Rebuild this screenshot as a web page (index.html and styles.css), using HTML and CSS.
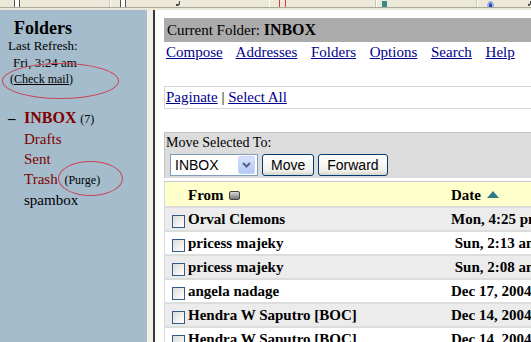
FILE: index.html
```html
<!DOCTYPE html>
<html lang="en">
<head>
    <meta charset="UTF-8">
    <meta name="viewport" content="width=device-width, initial-scale=1.0">
    <title>SquirrelMail - INBOX</title>
    <link rel="stylesheet" href="styles.css">
</head>
<body>
    <div class="toolbar">
        <span class="tb-icon tb-page"></span>
        <span class="tb-sep"></span>
        <span class="tb-icon tb-page"></span>
        <span class="tb-tick"></span>
        <span class="tb-sep"></span>
        <span class="tb-icon tb-red"></span>
        <span class="tb-sep"></span>
        <span class="tb-icon tb-teal"></span>
        <span class="tb-sep"></span>
        <span class="tb-icon tb-blue"></span>
        <span class="tb-tick tb-last"></span>
    </div>

    <div class="frames">
        <div class="sidebar">
            <h1>Folders</h1>
            <div class="refresh">
                <div>Last Refresh:</div>
                <div class="refresh-time">Fri, 3:24 am</div>
                <div class="refresh-check">(<a href="#">Check mail</a>)</div>
            </div>

            <ul class="folders">
                <li class="current"><span class="dash">&ndash;</span><a href="#">INBOX</a> <small>(7)</small></li>
                <li><a href="#">Drafts</a></li>
                <li><a href="#">Sent</a></li>
                <li><a href="#">Trash</a> <small class="purge">(Purge)</small></li>
                <li class="plain">spambox</li>
            </ul>

            <span class="mark mark-check"></span>
            <span class="mark mark-purge"></span>
        </div>

        <div class="splitter"></div>

        <div class="main">
            <div class="content">
                <div class="folder-bar">Current Folder: <b>INBOX</b></div>

                <div class="menu">
                    <a href="#">Compose</a>
                    <a href="#">Addresses</a>
                    <a href="#">Folders</a>
                    <a href="#">Options</a>
                    <a href="#">Search</a>
                    <a href="#">Help</a>
                </div>

                <div class="paging">
                    <a href="#">Paginate</a> | <a href="#">Select All</a>
                </div>

                <div class="move-box">
                    <div class="move-label">Move Selected To:</div>
                    <div class="move-controls">
                        <div class="select-box">
                            <span>INBOX</span>
                            <span class="select-arrow">
                                <svg width="9" height="6" viewBox="0 0 9 6"><path d="M1 1 L4.5 4.5 L8 1" fill="none" stroke="#4d6185" stroke-width="2"/></svg>
                            </span>
                        </div>
                        <button type="button">Move</button>
                        <button type="button">Forward</button>
                    </div>
                </div>

                <table class="messages">
                    <tr class="head">
                        <td class="check-col"></td>
                        <td class="from-col">From <span class="sort-none"></span></td>
                        <td class="date-col">Date <span class="sort-up"></span></td>
                    </tr>
                    <tr class="odd">
                        <td class="check-col"><span class="checkbox"></span></td>
                        <td>Orval Clemons</td>
                        <td>Mon, 4:25 pm</td>
                    </tr>
                    <tr>
                        <td class="check-col"><span class="checkbox"></span></td>
                        <td>pricess majeky</td>
                        <td>&nbsp;Sun, 2:13 am</td>
                    </tr>
                    <tr class="odd">
                        <td class="check-col"><span class="checkbox"></span></td>
                        <td>pricess majeky</td>
                        <td>&nbsp;Sun, 2:08 am</td>
                    </tr>
                    <tr>
                        <td class="check-col"><span class="checkbox"></span></td>
                        <td>angela nadage</td>
                        <td>Dec 17, 2004</td>
                    </tr>
                    <tr class="odd">
                        <td class="check-col"><span class="checkbox"></span></td>
                        <td>Hendra W Saputro [BOC]</td>
                        <td>Dec 14, 2004</td>
                    </tr>
                    <tr>
                        <td class="check-col"><span class="checkbox"></span></td>
                        <td>Hendra W Saputro [BOC]</td>
                        <td>Dec 14, 2004</td>
                    </tr>
                </table>
            </div>
        </div>
    </div>
</body>
</html>
```

FILE: styles.css
```css
body {
    margin: 0;
    padding: 0;
    font-family: "Liberation Serif", "Times New Roman", serif;
    background-color: #ece9d8;
    height: 342px;
    overflow: hidden;
}

/* browser toolbar, cut off at the top */
.toolbar {
    height: 7px;
    display: flex;
    align-items: flex-end;
    background-color: #ece9d8;
    border-bottom: 1px solid #aca899;
    margin-bottom: 2px;
    overflow: hidden;
    padding-left: 14px;
}

.tb-icon {
    display: block;
    width: 11px;
    height: 10px;
    margin-bottom: -4px;
}

.tb-page {
    background-color: #fff;
    border: 1px solid #555;
    width: 9px;
}

.tb-sep {
    width: 1px;
    height: 7px;
    background-color: #c9c5b4;
    border-right: 1px solid #fff;
    margin: 0 9px 0 89px;
}

.tb-tick {
    display: block;
    width: 5px;
    height: 3px;
    margin: 0 0 1px 50px;
    border-bottom: 2px solid #444;
    border-right: 1px solid #444;
    border-radius: 0 0 3px 0;
}

.tb-red {
    width: 11px;
    border: 1px solid #d23b3b;
    border-top: none;
}

.tb-teal {
    background-color: #3b8a8a;
    border-radius: 0 0 5px 5px;
    margin-left: -4px;
}

.tb-blue {
    background-color: #2a3fb8;
    border: 2px solid #9fb0e8;
    border-radius: 50%;
    width: 6px;
    height: 6px;
}

.tb-last {
    margin-left: 34px;
}

/* frames */
.frames {
    display: flex;
    height: 332px;
}

.sidebar {
    position: relative;
    width: 147px;
    background-color: #a4bccc;
    color: #000;
}

.sidebar h1 {
    font-size: 18px;
    line-height: 20px;
    margin: 0;
    padding: 8px 0 0 14px;
}

.refresh {
    font-size: 13px;
    line-height: 16.5px;
    padding-left: 8px;
}

.refresh-time {
    padding-left: 5px;
}

.refresh-check {
    font-size: 12px;
    padding-left: 2px;
}

.refresh-check a {
    color: #000;
}

.folders {
    list-style: none;
    margin: 20px 0 0 0;
    padding: 0 0 0 24px;
    font-size: 15px;
    line-height: 20px;
}

.folders a {
    color: #800000;
    text-decoration: none;
}

.folders .current {
    position: relative;
}

.folders .current a {
    font-weight: bold;
    font-size: 16px;
}

.folders .dash {
    position: absolute;
    left: -16px;
    font-weight: bold;
}

.folders small {
    font-size: 12px;
}

.folders .purge {
    margin-left: 3px;
}

.mark {
    position: absolute;
    border: 1.5px solid #cc4455;
    border-radius: 50%;
}

.mark-check {
    left: 2px;
    top: 53px;
    width: 115px;
    height: 34px;
}

.mark-purge {
    left: 58px;
    top: 151px;
    width: 63px;
    height: 33px;
}

.splitter {
    width: 6px;
    background-color: #f1efe6;
    border-right: 2px solid #3a3a3a;
}

.main {
    flex: 1;
    background-color: #fff;
    overflow: hidden;
}

.content {
    width: 620px;
    padding: 8px 0 0 9px;
    font-size: 15px;
}

.folder-bar {
    background-color: #ababab;
    height: 24px;
    line-height: 24px;
    padding-left: 3px;
}

.folder-bar b {
    font-size: 16px;
}

.menu {
    line-height: 20px;
    padding-left: 2px;
}

.menu a {
    color: #00008b;
    margin-right: 10px;
}

.paging {
    margin-top: 24px;
    border: 1px solid #d6d6d6;
    border-right: none;
    line-height: 21px;
    padding-left: 1px;
}

.paging a {
    color: #00008b;
}

.move-box {
    margin-top: 23px;
    background-color: #dcdcdc;
    border-top: 1px solid #c4c4c4;
    border-left: 1px solid #c4c4c4;
    padding: 0 0 2px 1px;
}

.move-label {
    font-size: 14px;
    line-height: 17px;
    padding-top: 1px;
}

.move-controls {
    display: flex;
    gap: 4px;
    margin-top: 3px;
    padding-left: 4px;
    font-family: "Liberation Sans", sans-serif;
    font-size: 14px;
}

.select-box {
    display: flex;
    align-items: center;
    justify-content: space-between;
    width: 82px;
    height: 20px;
    border: 1px solid #7f9db9;
    background-color: #fff;
    padding-left: 4px;
}

.select-arrow {
    display: flex;
    align-items: center;
    justify-content: center;
    width: 15px;
    height: 16px;
    margin-right: 2px;
    background: linear-gradient(#d7e3fb, #b4c8f3);
    border: 1px solid #c3d3fd;
    border-radius: 2px;
}

button {
    height: 22px;
    padding: 0 8px;
    font-family: "Liberation Sans", sans-serif;
    font-size: 14px;
    color: #000;
    border: 1px solid #003c74;
    border-radius: 3px;
    background: linear-gradient(#ffffff, #f0f0ea 80%, #d8d5c8);
}

.messages {
    margin-top: 3px;
    width: 620px;
    border-collapse: collapse;
    border-top: 1px solid #c8c8c8;
    border-left: 1px solid #d8d8d8;
    font-weight: bold;
}

.messages td {
    height: 22px;
    padding: 0;
    border-bottom: 2px solid #dcdcdc;
    white-space: nowrap;
}

.messages .head td {
    height: 22px;
    background-color: #ffffcc;
    padding-top: 2px;
}

.messages .odd td {
    background-color: #ececec;
}

.check-col {
    width: 23px;
    text-align: right;
}

.from-col {
    width: 263px;
}

.checkbox {
    display: inline-block;
    width: 11px;
    height: 11px;
    margin: 4px 3px 0 0;
    border: 1px solid #36588a;
    background: linear-gradient(135deg, #dcdcd7, #ffffff);
    vertical-align: top;
}

.sort-none {
    display: inline-block;
    width: 9px;
    height: 7px;
    border: 1px solid #444;
    border-radius: 2px;
    background: linear-gradient(#d8d8d8, #7a7a7a);
    margin-left: 2px;
}

.sort-up {
    display: inline-block;
    width: 0;
    height: 0;
    border-left: 6px solid transparent;
    border-right: 6px solid transparent;
    border-bottom: 7px solid #2b7c86;
    margin-left: 2px;
    vertical-align: 2px;
}
```
